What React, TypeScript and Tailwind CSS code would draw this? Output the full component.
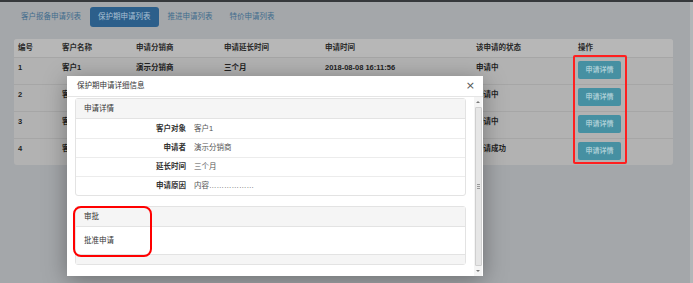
import React from "react";

const tabs = ["客户报备申请列表", "保护期申请列表", "推进申请列表", "特价申请列表"];
const cols = ["编号", "客户名称", "申请分销商", "申请延长时间", "申请时间", "该申请的状态", "操作"];
// rows 2-4 sit under the modal, only their edges show
const rows = [
  ["1", "客户1", "演示分销商", "三个月", "2018-08-08 16:11:56", "申请中"],
  ["2", "客户2", "", "", "", "申请中"],
  ["3", "客户3", "", "", "", "申请中"],
  ["4", "客户4", "", "", "", "申请成功"],
];
const details = [
  ["客户对象", "客户1"],
  ["申请者", "演示分销商"],
  ["延长时间", "三个月"],
  ["申请原因", "内容………………"],
];

const grid = "grid grid-cols-[44px_74px_88px_101px_151px_102px_99px]";

export default function App() {
  return (
    <div className="relative w-[693px] h-[283px] overflow-hidden bg-[#a4a7aa] text-[7.5px] leading-[10px] font-['Liberation_Sans','Noto_Sans_CJK_SC',sans-serif]">
      <div className="h-[2px] bg-[#36393c]" />

      <div className="flex gap-[1px] pl-[13px] pt-[5px]">
        {tabs.map((t, i) => (
          <div key={t}
            className={`h-[20px] px-[8px] flex items-center rounded-[3px] ${i === 1 ? "bg-[#2c5f8b] text-[#a9c0d4]" : "text-[#3f6c8d]"}`}>
            {t}
          </div>
        ))}
      </div>

      <div className="ml-[14px] mt-[12px] w-[659px] rounded-[3px] bg-[#b2b2b2] text-[#222]">
        <div className={`${grid} h-[18px] items-center bg-[#b7b7b7] rounded-t-[3px] font-bold text-[#2a2a2a]`}>
          {cols.map((c) => <div key={c} className="pl-[4px]">{c}</div>)}
        </div>
        {rows.map((r, i) => (
          <div key={i} className={`${grid} h-[27px] border-t border-[#a6a6a6] font-bold ${i === 3 ? "rounded-b-[3px]" : ""}`}>
            {r.map((v, j) => <div key={j} className="pl-[4px] pt-[5px] whitespace-nowrap">{v}</div>)}
            <div className="pl-[4px] pt-[3px]">
              <div className="w-[43px] h-[18px] rounded-[2px] bg-[#4690a2] text-[#a7ccd4] text-[7px] flex items-center justify-center">申请详情</div>
            </div>
          </div>
        ))}
      </div>

      <div className="absolute right-0 top-[2px] bottom-0 w-[3px] bg-[#b3b6b8]" />

      {/* modal */}
      <div className="absolute left-[67px] top-[76px] w-[416px] h-[200px] bg-white flex flex-col shadow-[0_4px_22px_rgba(0,0,0,0.35)] text-[#333]">
        <div className="h-[21px] shrink-0 border-b border-[#e5e5e5] flex items-center justify-between pl-[10px] pr-[8px]">
          <span>保护期申请详细信息</span>
          <span className="text-[11px] text-[#555] font-['DejaVu_Sans',sans-serif]">×</span>
        </div>
        <div className="flex flex-1 min-h-0">
          <div className="flex-1 pl-[8px] pr-[8px] pt-[1px]">
            <div className="border border-[#e3e3e3] rounded-[3px]">
              <div className="h-[20px] bg-[#f5f5f5] flex items-center pl-[8px] border-b border-[#e3e3e3]">申请详情</div>
              {details.map(([k, v], i) => (
                <div key={k} className={`h-[19px] flex items-center ${i > 0 ? "border-t border-[#ececec]" : ""}`}>
                  <div className="w-[110px] text-right font-bold">{k}</div>
                  <div className="pl-[8px] text-[#555]">{v}</div>
                </div>
              ))}
            </div>
            <div className="mt-[10px] border border-[#e3e3e3] rounded-[3px]">
              <div className="h-[20px] bg-[#f5f5f5] flex items-center pl-[8px] border-b border-[#e3e3e3]">审批</div>
              <div className="h-[27px] flex items-center pl-[8px]">批准申请</div>
              <div className="h-[10px] bg-[#f5f5f5] border-t border-[#e3e3e3]" />
            </div>
          </div>
          <div className="w-[8px] mr-[1px] bg-[#f4f4f4] flex flex-col items-center">
            <div className="h-[10px] flex items-center">
              <div className="w-0 h-0 border-l-[2px] border-r-[2px] border-b-[2px] border-l-transparent border-r-transparent border-b-[#777]" />
            </div>
            <div className="w-[7px] flex-1 bg-[#e6e6e6] border border-[#cfcfcf] rounded-[1px] flex flex-col items-center justify-center gap-[1px]">
              <div className="w-[3px] h-px bg-[#999]" />
              <div className="w-[3px] h-px bg-[#999]" />
              <div className="w-[3px] h-px bg-[#999]" />
            </div>
            <div className="h-[10px] flex items-center">
              <div className="w-0 h-0 border-l-[2px] border-r-[2px] border-t-[2px] border-l-transparent border-r-transparent border-t-[#777]" />
            </div>
          </div>
        </div>
      </div>

      {/* annotations */}
      <div className="absolute left-[573px] top-[55px] w-[54px] h-[109px] border-2 border-[#ff1f1f] rounded-[2px]" />
      <div className="absolute left-[73px] top-[206px] w-[79px] h-[51px] border-2 border-[#ff0000] rounded-[8px]" />
    </div>
  );
}
